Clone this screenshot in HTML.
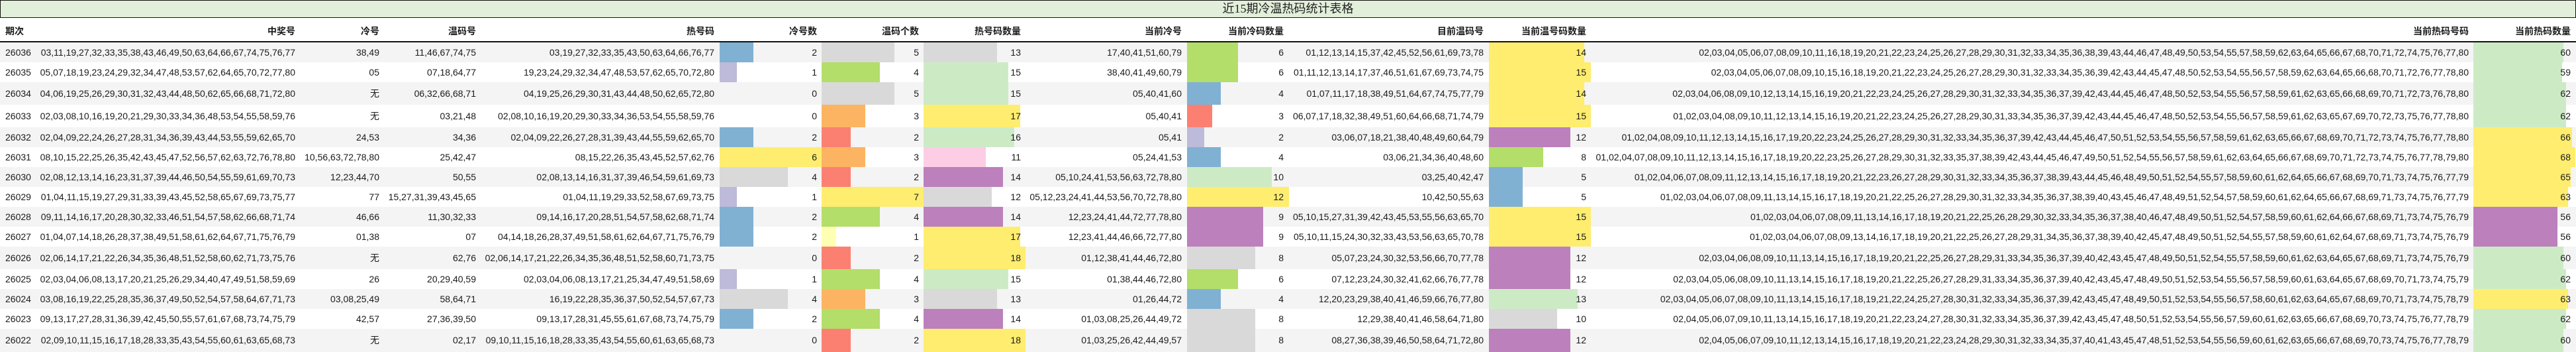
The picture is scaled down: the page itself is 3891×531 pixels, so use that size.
<!DOCTYPE html>
<html><head><meta charset="utf-8">
<style>
*{margin:0;padding:0;box-sizing:border-box}
body{width:3891px;height:531px;background:#fff;position:relative;overflow:hidden;font-family:"Liberation Sans","Noto Sans CJK SC",sans-serif;font-size:14px;color:#1a1a1a}
.title{position:absolute;left:0;top:0;width:3891px;height:27px;background:#e2efda;border:1.5px solid #111;text-align:center;font-family:"Liberation Serif","Noto Sans CJK SC",serif;font-size:18px;line-height:25px;color:#222}
.hd{position:absolute;left:0;top:27px;width:3891px;height:37px;border-bottom:2px solid #111;font-weight:bold;line-height:40px}
.r{position:absolute;left:0;width:3891px}
.g{background:#f4f4f4}
.r span,.hd span{position:absolute;top:0;white-space:nowrap}
.r i{position:absolute;top:0;bottom:0;display:block}
.bl{background:#80b1d3}.lv{background:#bebada}.gy{background:#d9d9d9}.gn{background:#b3de69}.lg{background:#ccebc5}.ye{background:#ffed6f}.or{background:#fdb462}.sa{background:#fb8072}.pk{background:#fccde5}.pu{background:#bc80bd}.py{background:#ffffb3}
</style></head><body>
<div class="title">近15期冷温热码统计表格</div>
<div class="hd">
<span style="left:8px">期次</span>
<span style="right:3445px">中奖号</span>
<span style="right:3318px">冷号</span>
<span style="right:3172px">温码号</span>
<span style="right:2812px">热号码</span>
<span style="right:2657px">冷号数</span>
<span style="right:2503px">温码个数</span>
<span style="right:2349px">热号码数量</span>
<span style="right:2106px">当前冷号</span>
<span style="right:1952px">当前冷码数量</span>
<span style="right:1650px">目前温码号</span>
<span style="right:1495px">当前温号码数量</span>
<span style="right:162px">当前热码号码</span>
<span style="right:8px">当前热码数量</span>
</div>

<div class="r g" style="top:64px;height:30px;line-height:30px">
<i class="bl" style="left:1087px;width:51px"></i><i class="gy" style="left:1241px;width:110px"></i><i class="gy" style="left:1395px;width:111px"></i><i class="gn" style="left:1793px;width:77px"></i><i class="ye" style="left:2249px;width:144px"></i><i class="lg" style="left:3736px;width:136px"></i>
<span style="left:8px">26036</span><span style="right:3445px">03,11,19,27,32,33,35,38,43,46,49,50,63,64,66,67,74,75,76,77</span><span style="right:3318px">38,49</span><span style="right:3172px">11,46,67,74,75</span><span style="right:2812px">03,19,27,32,33,35,43,50,63,64,66,76,77</span><span style="right:2657px">2</span><span style="right:2503px">5</span><span style="right:2349px">13</span><span style="right:2106px">17,40,41,51,60,79</span><span style="right:1952px">6</span><span style="right:1650px">01,12,13,14,15,37,42,45,52,56,61,69,73,78</span><span style="right:1495px">14</span><span style="right:162px">02,03,04,05,06,07,08,09,10,11,16,18,19,20,21,22,23,24,25,26,27,28,29,30,31,32,33,34,35,36,38,39,43,44,46,47,48,49,50,53,54,55,57,58,59,62,63,64,65,66,67,68,70,71,72,74,75,76,77,80</span><span style="right:8px">60</span>
</div>

<div class="r" style="top:94px;height:30px;line-height:30px">
<i class="lv" style="left:1087px;width:26px"></i><i class="gn" style="left:1241px;width:88px"></i><i class="lg" style="left:1395px;width:128px"></i><i class="gn" style="left:1793px;width:77px"></i><i class="ye" style="left:2249px;width:154px"></i><i class="lg" style="left:3736px;width:134px"></i>
<span style="left:8px">26035</span><span style="right:3445px">05,07,18,19,23,24,29,32,34,47,48,53,57,62,64,65,70,72,77,80</span><span style="right:3318px">05</span><span style="right:3172px">07,18,64,77</span><span style="right:2812px">19,23,24,29,32,34,47,48,53,57,62,65,70,72,80</span><span style="right:2657px">1</span><span style="right:2503px">4</span><span style="right:2349px">15</span><span style="right:2106px">38,40,41,49,60,79</span><span style="right:1952px">6</span><span style="right:1650px">01,11,12,13,14,17,37,46,51,61,67,69,73,74,75</span><span style="right:1495px">15</span><span style="right:162px">02,03,04,05,06,07,08,09,10,15,16,18,19,20,21,22,23,24,25,26,27,28,29,30,31,32,33,34,35,36,39,42,43,44,45,47,48,50,52,53,54,55,56,57,58,59,62,63,64,65,66,68,70,71,72,76,77,78,80</span><span style="right:8px">59</span>
</div>

<div class="r g" style="top:124px;height:34px;line-height:34px">
<i class="gy" style="left:1241px;width:110px"></i><i class="lg" style="left:1395px;width:128px"></i><i class="bl" style="left:1793px;width:51px"></i><i class="ye" style="left:2249px;width:144px"></i><i class="lg" style="left:3736px;width:140px"></i>
<span style="left:8px">26034</span><span style="right:3445px">04,06,19,25,26,29,30,31,32,43,44,48,50,62,65,66,68,71,72,80</span><span style="right:3318px">无</span><span style="right:3172px">06,32,66,68,71</span><span style="right:2812px">04,19,25,26,29,30,31,43,44,48,50,62,65,72,80</span><span style="right:2657px">0</span><span style="right:2503px">5</span><span style="right:2349px">15</span><span style="right:2106px">05,40,41,60</span><span style="right:1952px">4</span><span style="right:1650px">01,07,11,17,18,38,49,51,64,67,74,75,77,79</span><span style="right:1495px">14</span><span style="right:162px">02,03,04,06,08,09,10,12,13,14,15,16,19,20,21,22,23,24,25,26,27,28,29,30,31,32,33,34,35,36,37,39,42,43,44,45,46,47,48,50,52,53,54,55,56,57,58,59,61,62,63,65,66,68,69,70,71,72,73,76,78,80</span><span style="right:8px">62</span>
</div>

<div class="r" style="top:158px;height:34px;line-height:34px">
<i class="or" style="left:1241px;width:66px"></i><i class="ye" style="left:1395px;width:146px"></i><i class="sa" style="left:1793px;width:38px"></i><i class="ye" style="left:2249px;width:154px"></i><i class="lg" style="left:3736px;width:140px"></i>
<span style="left:8px">26033</span><span style="right:3445px">02,03,08,10,16,19,20,21,29,30,33,34,36,48,53,54,55,58,59,76</span><span style="right:3318px">无</span><span style="right:3172px">03,21,48</span><span style="right:2812px">02,08,10,16,19,20,29,30,33,34,36,53,54,55,58,59,76</span><span style="right:2657px">0</span><span style="right:2503px">3</span><span style="right:2349px">17</span><span style="right:2106px">05,40,41</span><span style="right:1952px">3</span><span style="right:1650px">06,07,17,18,32,38,49,51,60,64,66,68,71,74,79</span><span style="right:1495px">15</span><span style="right:162px">01,02,03,04,08,09,10,11,12,13,14,15,16,19,20,21,22,23,24,25,26,27,28,29,30,31,33,34,35,36,37,39,42,43,44,45,46,47,48,50,52,53,54,55,56,57,58,59,61,62,63,65,67,69,70,72,73,75,76,77,78,80</span><span style="right:8px">62</span>
</div>

<div class="r g" style="top:192px;height:30px;line-height:30px">
<i class="bl" style="left:1087px;width:51px"></i><i class="sa" style="left:1241px;width:44px"></i><i class="lg" style="left:1395px;width:137px"></i><i class="lv" style="left:1793px;width:26px"></i><i class="pu" style="left:2249px;width:123px"></i><i class="ye" style="left:3736px;width:149px"></i>
<span style="left:8px">26032</span><span style="right:3445px">02,04,09,22,24,26,27,28,31,34,36,39,43,44,53,55,59,62,65,70</span><span style="right:3318px">24,53</span><span style="right:3172px">34,36</span><span style="right:2812px">02,04,09,22,26,27,28,31,39,43,44,55,59,62,65,70</span><span style="right:2657px">2</span><span style="right:2503px">2</span><span style="right:2349px">16</span><span style="right:2106px">05,41</span><span style="right:1952px">2</span><span style="right:1650px">03,06,07,18,21,38,40,48,49,60,64,79</span><span style="right:1495px">12</span><span style="right:162px">01,02,04,08,09,10,11,12,13,14,15,16,17,19,20,22,23,24,25,26,27,28,29,30,31,32,33,34,35,36,37,39,42,43,44,45,46,47,50,51,52,53,54,55,56,57,58,59,61,62,63,65,66,67,68,69,70,71,72,73,74,75,76,77,78,80</span><span style="right:8px">66</span>
</div>

<div class="r" style="top:222px;height:30px;line-height:30px">
<i class="ye" style="left:1087px;width:154px"></i><i class="or" style="left:1241px;width:66px"></i><i class="pk" style="left:1395px;width:94px"></i><i class="bl" style="left:1793px;width:51px"></i><i class="gn" style="left:2249px;width:82px"></i><i class="ye" style="left:3736px;width:154px"></i>
<span style="left:8px">26031</span><span style="right:3445px">08,10,15,22,25,26,35,42,43,45,47,52,56,57,62,63,72,76,78,80</span><span style="right:3318px">10,56,63,72,78,80</span><span style="right:3172px">25,42,47</span><span style="right:2812px">08,15,22,26,35,43,45,52,57,62,76</span><span style="right:2657px">6</span><span style="right:2503px">3</span><span style="right:2349px">11</span><span style="right:2106px">05,24,41,53</span><span style="right:1952px">4</span><span style="right:1650px">03,06,21,34,36,40,48,60</span><span style="right:1495px">8</span><span style="right:162px">01,02,04,07,08,09,10,11,12,13,14,15,16,17,18,19,20,22,23,25,26,27,28,29,30,31,32,33,35,37,38,39,42,43,44,45,46,47,49,50,51,52,54,55,56,57,58,59,61,62,63,64,65,66,67,68,69,70,71,72,73,74,75,76,77,78,79,80</span><span style="right:8px">68</span>
</div>

<div class="r g" style="top:252px;height:30px;line-height:30px">
<i class="gy" style="left:1087px;width:103px"></i><i class="sa" style="left:1241px;width:44px"></i><i class="pu" style="left:1395px;width:120px"></i><i class="lg" style="left:1793px;width:128px"></i><i class="bl" style="left:2249px;width:51px"></i><i class="ye" style="left:3736px;width:147px"></i>
<span style="left:8px">26030</span><span style="right:3445px">02,08,12,13,14,16,23,31,37,39,44,46,50,54,55,59,61,69,70,73</span><span style="right:3318px">12,23,44,70</span><span style="right:3172px">50,55</span><span style="right:2812px">02,08,13,14,16,31,37,39,46,54,59,61,69,73</span><span style="right:2657px">4</span><span style="right:2503px">2</span><span style="right:2349px">14</span><span style="right:2106px">05,10,24,41,53,56,63,72,78,80</span><span style="right:1952px">10</span><span style="right:1650px">03,25,40,42,47</span><span style="right:1495px">5</span><span style="right:162px">01,02,04,06,07,08,09,11,12,13,14,15,16,17,18,19,20,21,22,23,26,27,28,29,30,31,32,33,34,35,36,37,38,39,43,44,45,46,48,49,50,51,52,54,55,57,58,59,60,61,62,64,65,66,67,68,69,70,71,73,74,75,76,77,79</span><span style="right:8px">65</span>
</div>

<div class="r" style="top:282px;height:30px;line-height:30px">
<i class="lv" style="left:1087px;width:26px"></i><i class="ye" style="left:1241px;width:154px"></i><i class="gy" style="left:1395px;width:103px"></i><i class="ye" style="left:1793px;width:154px"></i><i class="bl" style="left:2249px;width:51px"></i><i class="ye" style="left:3736px;width:143px"></i>
<span style="left:8px">26029</span><span style="right:3445px">01,04,11,15,19,27,29,31,33,39,43,45,52,58,65,67,69,73,75,77</span><span style="right:3318px">77</span><span style="right:3172px">15,27,31,39,43,45,65</span><span style="right:2812px">01,04,11,19,29,33,52,58,67,69,73,75</span><span style="right:2657px">1</span><span style="right:2503px">7</span><span style="right:2349px">12</span><span style="right:2106px">05,12,23,24,41,44,53,56,70,72,78,80</span><span style="right:1952px">12</span><span style="right:1650px">10,42,50,55,63</span><span style="right:1495px">5</span><span style="right:162px">01,02,03,04,06,07,08,09,11,13,14,15,16,17,18,19,20,21,22,25,26,27,28,29,30,31,32,33,34,35,36,37,38,39,40,43,45,46,47,48,49,51,52,54,57,58,59,60,61,62,64,65,66,67,68,69,71,73,74,75,76,77,79</span><span style="right:8px">63</span>
</div>

<div class="r g" style="top:312px;height:30px;line-height:30px">
<i class="bl" style="left:1087px;width:51px"></i><i class="gn" style="left:1241px;width:88px"></i><i class="pu" style="left:1395px;width:120px"></i><i class="pu" style="left:1793px;width:115px"></i><i class="ye" style="left:2249px;width:154px"></i><i class="pu" style="left:3736px;width:127px"></i>
<span style="left:8px">26028</span><span style="right:3445px">09,11,14,16,17,20,28,30,32,33,46,51,54,57,58,62,66,68,71,74</span><span style="right:3318px">46,66</span><span style="right:3172px">11,30,32,33</span><span style="right:2812px">09,14,16,17,20,28,51,54,57,58,62,68,71,74</span><span style="right:2657px">2</span><span style="right:2503px">4</span><span style="right:2349px">14</span><span style="right:2106px">12,23,24,41,44,72,77,78,80</span><span style="right:1952px">9</span><span style="right:1650px">05,10,15,27,31,39,42,43,45,53,55,56,63,65,70</span><span style="right:1495px">15</span><span style="right:162px">01,02,03,04,06,07,08,09,11,13,14,16,17,18,19,20,21,22,25,26,28,29,30,32,33,34,35,36,37,38,40,46,47,48,49,50,51,52,54,57,58,59,60,61,62,64,66,67,68,69,71,73,74,75,76,79</span><span style="right:8px">56</span>
</div>

<div class="r" style="top:342px;height:30px;line-height:30px">
<i class="bl" style="left:1087px;width:51px"></i><i class="py" style="left:1241px;width:22px"></i><i class="ye" style="left:1395px;width:146px"></i><i class="pu" style="left:1793px;width:115px"></i><i class="ye" style="left:2249px;width:154px"></i><i class="pu" style="left:3736px;width:127px"></i>
<span style="left:8px">26027</span><span style="right:3445px">01,04,07,14,18,26,28,37,38,49,51,58,61,62,64,67,71,75,76,79</span><span style="right:3318px">01,38</span><span style="right:3172px">07</span><span style="right:2812px">04,14,18,26,28,37,49,51,58,61,62,64,67,71,75,76,79</span><span style="right:2657px">2</span><span style="right:2503px">1</span><span style="right:2349px">17</span><span style="right:2106px">12,23,41,44,46,66,72,77,80</span><span style="right:1952px">9</span><span style="right:1650px">05,10,11,15,24,30,32,33,43,53,56,63,65,70,78</span><span style="right:1495px">15</span><span style="right:162px">01,02,03,04,06,07,08,09,13,14,16,17,18,19,20,21,22,25,26,27,28,29,31,34,35,36,37,38,39,40,42,45,47,48,49,50,51,52,54,55,57,58,59,60,61,62,64,67,68,69,71,73,74,75,76,79</span><span style="right:8px">56</span>
</div>

<div class="r g" style="top:372px;height:34px;line-height:34px">
<i class="sa" style="left:1241px;width:44px"></i><i class="ye" style="left:1395px;width:154px"></i><i class="gy" style="left:1793px;width:103px"></i><i class="pu" style="left:2249px;width:123px"></i><i class="lg" style="left:3736px;width:136px"></i>
<span style="left:8px">26026</span><span style="right:3445px">02,06,14,17,21,22,26,34,35,36,48,51,52,58,60,62,71,73,75,76</span><span style="right:3318px">无</span><span style="right:3172px">62,76</span><span style="right:2812px">02,06,14,17,21,22,26,34,35,36,48,51,52,58,60,71,73,75</span><span style="right:2657px">0</span><span style="right:2503px">2</span><span style="right:2349px">18</span><span style="right:2106px">01,12,38,41,44,46,72,80</span><span style="right:1952px">8</span><span style="right:1650px">05,07,23,24,30,32,53,56,66,70,77,78</span><span style="right:1495px">12</span><span style="right:162px">02,03,04,06,08,09,10,11,13,14,15,16,17,18,19,20,21,22,25,26,27,28,29,31,33,34,35,36,37,39,40,42,43,45,47,48,49,50,51,52,54,55,57,58,59,60,61,62,63,64,65,67,68,69,71,73,74,75,76,79</span><span style="right:8px">60</span>
</div>

<div class="r" style="top:406px;height:30px;line-height:30px">
<i class="lv" style="left:1087px;width:26px"></i><i class="gn" style="left:1241px;width:88px"></i><i class="lg" style="left:1395px;width:128px"></i><i class="gn" style="left:1793px;width:77px"></i><i class="pu" style="left:2249px;width:123px"></i><i class="lg" style="left:3736px;width:140px"></i>
<span style="left:8px">26025</span><span style="right:3445px">02,03,04,06,08,13,17,20,21,25,26,29,34,40,47,49,51,58,59,69</span><span style="right:3318px">26</span><span style="right:3172px">20,29,40,59</span><span style="right:2812px">02,03,04,06,08,13,17,21,25,34,47,49,51,58,69</span><span style="right:2657px">1</span><span style="right:2503px">4</span><span style="right:2349px">15</span><span style="right:2106px">01,38,44,46,72,80</span><span style="right:1952px">6</span><span style="right:1650px">07,12,23,24,30,32,41,62,66,76,77,78</span><span style="right:1495px">12</span><span style="right:162px">02,03,04,05,06,08,09,10,11,13,14,15,16,17,18,19,20,21,22,25,26,27,28,29,31,33,34,35,36,37,39,40,42,43,45,47,48,49,50,51,52,53,54,55,56,57,58,59,60,61,63,64,65,67,68,69,70,71,73,74,75,79</span><span style="right:8px">62</span>
</div>

<div class="r g" style="top:436px;height:30px;line-height:30px">
<i class="gy" style="left:1087px;width:103px"></i><i class="or" style="left:1241px;width:66px"></i><i class="gy" style="left:1395px;width:111px"></i><i class="bl" style="left:1793px;width:51px"></i><i class="lg" style="left:2249px;width:134px"></i><i class="ye" style="left:3736px;width:143px"></i>
<span style="left:8px">26024</span><span style="right:3445px">03,08,16,19,22,25,28,35,36,37,49,50,52,54,57,58,64,67,71,73</span><span style="right:3318px">03,08,25,49</span><span style="right:3172px">58,64,71</span><span style="right:2812px">16,19,22,28,35,36,37,50,52,54,57,67,73</span><span style="right:2657px">4</span><span style="right:2503px">3</span><span style="right:2349px">13</span><span style="right:2106px">01,26,44,72</span><span style="right:1952px">4</span><span style="right:1650px">12,20,23,29,38,40,41,46,59,66,76,77,80</span><span style="right:1495px">13</span><span style="right:162px">02,03,04,05,06,07,08,09,10,11,13,14,15,16,17,18,19,21,22,24,25,27,28,30,31,32,33,34,35,36,37,39,42,43,45,47,48,49,50,51,52,53,54,55,56,57,58,60,61,62,63,64,65,67,68,69,70,71,73,74,75,78,79</span><span style="right:8px">63</span>
</div>

<div class="r" style="top:466px;height:30px;line-height:30px">
<i class="bl" style="left:1087px;width:51px"></i><i class="gn" style="left:1241px;width:88px"></i><i class="pu" style="left:1395px;width:120px"></i><i class="gy" style="left:1793px;width:103px"></i><i class="gy" style="left:2249px;width:103px"></i><i class="lg" style="left:3736px;width:140px"></i>
<span style="left:8px">26023</span><span style="right:3445px">09,13,17,27,28,31,36,39,42,45,50,55,57,61,67,68,73,74,75,79</span><span style="right:3318px">42,57</span><span style="right:3172px">27,36,39,50</span><span style="right:2812px">09,13,17,28,31,45,55,61,67,68,73,74,75,79</span><span style="right:2657px">2</span><span style="right:2503px">4</span><span style="right:2349px">14</span><span style="right:2106px">01,03,08,25,26,44,49,72</span><span style="right:1952px">8</span><span style="right:1650px">12,29,38,40,41,46,58,64,71,80</span><span style="right:1495px">10</span><span style="right:162px">02,04,05,06,07,09,10,11,13,14,15,16,17,18,19,20,21,22,23,24,27,28,30,31,32,33,34,35,36,37,39,42,43,45,47,48,50,51,52,53,54,55,56,57,59,60,61,62,63,65,66,67,68,69,70,73,74,75,76,77,78,79</span><span style="right:8px">62</span>
</div>

<div class="r g" style="top:496px;height:35px;line-height:34px">
<i class="sa" style="left:1241px;width:44px"></i><i class="ye" style="left:1395px;width:154px"></i><i class="gy" style="left:1793px;width:103px"></i><i class="pu" style="left:2249px;width:123px"></i><i class="lg" style="left:3736px;width:136px"></i>
<span style="left:8px">26022</span><span style="right:3445px">02,09,10,11,15,16,17,18,28,33,35,43,54,55,60,61,63,65,68,73</span><span style="right:3318px">无</span><span style="right:3172px">02,17</span><span style="right:2812px">09,10,11,15,16,18,28,33,35,43,54,55,60,61,63,65,68,73</span><span style="right:2657px">0</span><span style="right:2503px">2</span><span style="right:2349px">18</span><span style="right:2106px">01,03,25,26,42,44,49,57</span><span style="right:1952px">8</span><span style="right:1650px">08,27,36,38,39,46,50,58,64,71,72,80</span><span style="right:1495px">12</span><span style="right:162px">02,04,05,06,07,09,10,11,12,13,14,15,16,17,18,19,20,21,22,23,24,28,29,30,31,32,33,34,35,37,40,41,43,45,47,48,51,52,53,54,55,56,59,60,61,62,63,65,66,67,68,69,70,73,74,75,76,77,78,79</span><span style="right:8px">60</span>
</div>
</body></html>
